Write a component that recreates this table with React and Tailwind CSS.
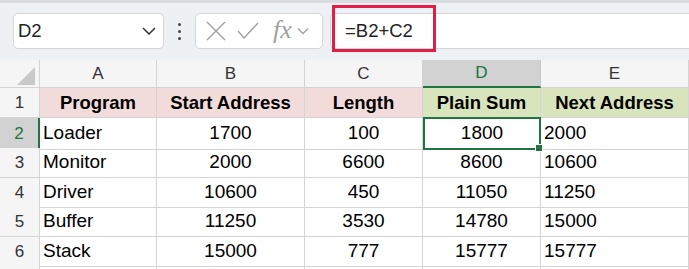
// Spreadsheet view: name box, formula bar with a highlighted formula,
// and a small program/address table.

const COLS = ['A', 'B', 'C', 'D', 'E'];

const ROWS = [
  { h: 'h-[30px]', cells: ['Loader', '1700', '100', '1800', '2000'] },
  { h: 'h-[30px]', cells: ['Monitor', '2000', '6600', '8600', '10600'] },
  { h: 'h-[29px]', cells: ['Driver', '10600', '450', '11050', '11250'] },
  { h: 'h-[30px]', cells: ['Buffer', '11250', '3530', '14780', '15000'] },
  { h: 'h-[29px]', cells: ['Stack', '15000', '777', '15777', '15777'] },
];

const HEAD = ['Program', 'Start Address', 'Length', 'Plain Sum', 'Next Address'];

const GRID = 'grid grid-cols-[40px_117px_148px_118px_118px_148px]';
const FONT = { fontFamily: '"Liberation Sans", Arial, sans-serif' };

function Chevron({ className }) {
  return (
    <svg width="14" height="8" viewBox="0 0 14 8" className={className}>
      <path d="M1 1l6 6 6-6" fill="none" stroke="currentColor" strokeWidth="1.5" />
    </svg>
  );
}

function Toolbar() {
  return (
    <div className="relative h-[60px] bg-[#eef1f4] border-t-[3px] border-[#d9dcdf] flex items-start pt-[10px] pl-[13px]">
      <div className="w-[151px] h-[36px] bg-white border border-[#d3d6da] rounded-[5px] flex items-center justify-between pl-[4px] pr-[7px]">
        <span className="text-[18.5px] text-[#222]">D2</span>
        <Chevron className="text-[#333]" />
      </div>
      <div className="w-[31px] h-[36px] flex flex-col items-center justify-center gap-[4px]">
        <span className="w-[3px] h-[3px] rounded-full bg-[#444]" />
        <span className="w-[3px] h-[3px] rounded-full bg-[#444]" />
        <span className="w-[3px] h-[3px] rounded-full bg-[#444]" />
      </div>
      <div className="w-[128px] h-[36px] bg-white border border-[#d3d6da] rounded-[5px] flex items-center pl-[9px] text-[#a0a0a0]">
        <svg width="22" height="22" viewBox="0 0 22 22">
          <path d="M2 2l18 18M20 2L2 20" stroke="currentColor" strokeWidth="1.4" />
        </svg>
        <svg width="22" height="18" viewBox="0 0 22 18" className="ml-[10px]">
          <path d="M1 9l6 7L21 1" fill="none" stroke="currentColor" strokeWidth="1.4" />
        </svg>
        <span
          className="ml-[14px] text-[26px] italic leading-none -mt-[3px]"
          style={{ fontFamily: '"Liberation Serif", "Times New Roman", serif' }}
        >
          fx
        </span>
        <Chevron className="ml-[5px] w-[12px]" />
      </div>
      <div className="ml-[7px] flex-1 h-[36px] bg-white border border-r-0 border-[#d3d6da] rounded-l-[5px] flex items-center pl-[14px]">
        <span className="text-[18.5px] text-[#222]">=B2+C2</span>
      </div>
      <div className="absolute left-[332px] top-[2px] w-[104px] h-[47px] border-[3px] border-[#e11d48]" />
    </div>
  );
}

function ColumnHeader() {
  return (
    <div className={`${GRID} h-[28px] bg-[#f5f5f5] text-[17px] text-[#333]`}>
      <div className="relative border-r border-b border-[#d4d4d4]">
        <svg width="40" height="28" viewBox="0 0 40 28" className="absolute inset-0">
          <path d="M17 25L35 7V25Z" fill="#c8c8c8" />
        </svg>
      </div>
      {COLS.map((c) =>
        c === 'D' ? (
          <div key={c} className="flex items-center justify-center bg-[#d2d2d2] text-[#217346] border-r border-[#c6c6c6] border-b-2 border-b-[#217346]">
            {c}
          </div>
        ) : (
          <div key={c} className="flex items-center justify-center border-r border-b border-[#d4d4d4]">
            {c}
          </div>
        ),
      )}
    </div>
  );
}

export default function App() {
  return (
    <div className="w-[689px] h-[269px] overflow-hidden bg-white" style={FONT}>
      <Toolbar />
      <ColumnHeader />

      {/* row 1: headings */}
      <div className={`${GRID} h-[30px] text-[18.5px] font-bold text-black`}>
        <div className="flex items-center justify-center bg-[#f5f5f5] border-r border-b border-[#d4d4d4] text-[17px] font-normal text-[#333]">
          1
        </div>
        {HEAD.map((t, i) => (
          <div
            key={t}
            className={`flex items-center justify-center border-r border-b border-[#d4d4d4] ${i < 3 ? 'bg-[#f2dcdb]' : 'bg-[#d8e4bc]'}`}
          >
            {t}
          </div>
        ))}
      </div>

      {ROWS.map((row, r) => {
        const sel = r === 0;
        return (
          <div key={r} className={`${GRID} ${row.h} text-[19px] text-black`}>
            <div
              className={`flex items-center justify-center border-b text-[17px] ${
                sel
                  ? 'bg-[#d2d2d2] text-[#217346] border-r-2 border-r-[#217346] border-b-[#c6c6c6]'
                  : 'bg-[#f5f5f5] text-[#333] border-r border-[#d4d4d4]'
              }`}
            >
              {r + 2}
            </div>
            {row.cells.map((v, c) => {
              const left = c === 0 || c === 4;
              if (sel && c === 3) {
                return (
                  <div key={c} className="relative flex items-center justify-center border-2 border-[#217346] -mt-[1px]">
                    {v}
                    <span className="absolute -right-[4px] -bottom-[4px] w-[6px] h-[6px] bg-[#217346] border border-white box-content" />
                  </div>
                );
              }
              return (
                <div
                  key={c}
                  className={`flex items-center border-r border-b border-[#d4d4d4] ${left ? 'justify-start pl-[3px]' : 'justify-center'}`}
                >
                  {v}
                </div>
              );
            })}
          </div>
        );
      })}

      <div className={`${GRID} h-[10px]`}>
        <div className="bg-[#f5f5f5] border-r border-[#d4d4d4]" />
        {COLS.map((c) => (
          <div key={c} className="border-r border-[#d4d4d4]" />
        ))}
      </div>
    </div>
  );
}
